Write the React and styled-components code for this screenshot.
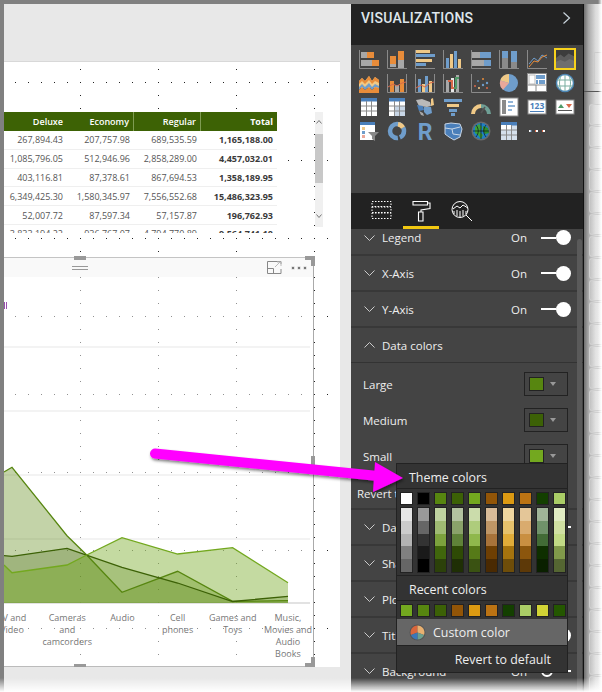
import React from "react";
import styled, { createGlobalStyle } from "styled-components";

const GlobalStyle = createGlobalStyle`
  html, body {
    margin: 0;
    padding: 0;
    background: #fff;
  }
  body {
    font-family: "Open Sans", "Liberation Sans", sans-serif;
  }
`;

const Frame = styled.div`
  position: relative;
  display: flex;
  width: 602px;
  height: 692px;
  padding: 4px 0 0 4px;
  box-sizing: border-box;
  overflow: hidden;
  background: #808080;
`;

const Workspace = styled.div`
  width: 347px;
  padding-top: 58px;
  box-sizing: border-box;
  background: #e8e8e8;
  box-shadow: inset 0 -1px 0 #e8e8e8;
`;

const Canvas = styled.div`
  position: relative;
  width: 336px;
  height: 605px;
  overflow: hidden;
  background: #fff;
  box-shadow: 0 -1px 0 #d8d8d8;
`;

const DotGrid = styled.svg`
  position: absolute;
  left: 0;
  top: 0;
  width: 336px;
  height: 605px;
`;

/* table visual */
const TableVisual = styled.div`
  position: absolute;
  left: 0;
  top: 50px;
  display: flex;
  justify-content: space-between;
  width: 319px;
  height: 121px;
`;

const TableClip = styled.div`
  width: 273px;
  height: 121px;
  overflow: hidden;
  background: #fff;
  font-size: 9px;
  color: #555;
`;

const TableRow = styled.div`
  display: grid;
  grid-template-columns: 63px 67px 67px 76px;
  height: ${(p) => (p.$head ? "19px" : "18.8px")};
  box-sizing: border-box;
  background: ${(p) => (p.$head ? "#3d6205" : "#fff")};
  color: ${(p) => (p.$head ? "#fff" : "#555")};
  font-weight: ${(p) => (p.$head ? 600 : 400)};
  border-bottom: ${(p) => (p.$head ? "0" : "1px solid #efefef")};
`;

const Cell = styled.div`
  display: flex;
  align-items: center;
  justify-content: flex-end;
  padding-right: 4px;
  white-space: nowrap;
  font-weight: ${(p) => (p.$bold ? 700 : "inherit")};
  color: ${(p) => (p.$bold && !p.$head ? "#3a3a3a" : "inherit")};
  border-right: ${(p) => (p.$line ? "1px solid #7f9c52" : "0")};
`;

const TableScroll = styled.div`
  display: flex;
  flex-direction: column;
  align-items: center;
  width: 8px;
  height: 115px;
  background: #f0f0f0;
`;

const ScrollThumb = styled.div`
  flex: none;
  width: 8px;
  height: 49px;
  background: #c8c8c8;
`;

const ScrollArrow = styled.svg`
  flex: none;
  width: 6px;
  height: 4px;
  margin: ${(p) => p.$margin};
`;

/* chart visual */
const ChartVisual = styled.div`
  position: absolute;
  left: 0;
  top: 195px;
  width: 310px;
  height: 410px;
  box-sizing: border-box;
  background: rgba(255, 255, 255, 0.5);
  border-top: 1px solid #c4c4c4;
  border-right: 1px solid #aaa;
  border-bottom: 1px solid #bbb;
`;

const ChartHeader = styled.div`
  display: flex;
  align-items: center;
  height: 19px;
  padding: 0 7px 0 68px;
  background: #f9f9f9;
`;

const DragLines = styled.div`
  width: 16px;
  height: 2px;
  border-top: 1px solid #999;
  border-bottom: 1px solid #999;
`;

const HeaderIcons = styled.div`
  display: flex;
  align-items: center;
  gap: 10px;
  margin-left: auto;
`;

const MoreDots = styled.div`
  display: flex;
  gap: 4px;
`;

const MoreDot = styled.i`
  width: 2px;
  height: 2px;
  background: #777;
  box-shadow: 0 0 0 0.5px #ccc;
`;

const Plot = styled.svg`
  display: block;
  width: 309px;
  height: 328px;
`;

const AxisLabels = styled.div`
  display: flex;
  margin: 7px 0 0 -19.6px;
  font-size: 9px;
  line-height: 12px;
  color: #777;
`;

const AxisLabel = styled.div`
  flex: 0 0 55.2px;
  text-align: center;
  white-space: pre-line;
`;

const LegendTick = styled.div`
  position: absolute;
  left: 0;
  top: 240px;
  width: 3px;
  height: 7px;
  border-left: 1px solid #9a4fb0;
  border-right: 1px solid #9a4fb0;
  box-sizing: border-box;
`;

const Handle = styled.div`
  position: absolute;
  left: ${(p) => p.$x}px;
  top: ${(p) => p.$y}px;
  width: ${(p) => p.$w}px;
  height: ${(p) => p.$h}px;
  background: #999;
`;

const Corner = styled.div`
  position: absolute;
  left: 301px;
  top: ${(p) => p.$y}px;
  width: 10px;
  height: 10px;
  box-sizing: border-box;
  border-right: 4px solid #999;
  ${(p) => (p.$bottom ? "border-bottom: 4px solid #999;" : "border-top: 4px solid #999;")}
`;

/* visualizations pane */
const Pane = styled.div`
  position: relative;
  display: flex;
  flex-direction: column;
  flex: 0 0 232px;
  box-sizing: content-box;
  border-right: 1px solid #111;
  background: #444;
  color: #eee;
  font-size: 11.5px;
`;

const PaneHeader = styled.div`
  display: flex;
  justify-content: space-between;
  height: 41px;
  padding: 7px 12px 0 10px;
  box-sizing: border-box;
  background: #222;
`;

const PaneTitle = styled.div`
  font-family: "Roboto", sans-serif;
  font-size: 14px;
  line-height: 14px;
  font-weight: 500;
  letter-spacing: 0.25px;
  color: #dfe6ec;
`;

const Gallery = styled.div`
  display: grid;
  grid-template-columns: repeat(8, 28px);
  grid-auto-rows: 24px;
  align-content: start;
  height: 148px;
  padding: 2px 0 0 4px;
  box-sizing: border-box;
`;

const GalleryCell = styled.div`
  display: flex;
  align-items: center;
  justify-content: center;
  width: 28px;
  height: 24px;
`;

const Selected = styled.div`
  display: flex;
  align-items: center;
  justify-content: center;
  width: 22px;
  height: 22px;
  box-sizing: border-box;
  border: 2px solid #f7d21c;
`;

const Viz = styled.svg`
  display: block;
  width: ${(p) => p.$size || 20}px;
  height: ${(p) => p.$size || 20}px;
`;

const TabBar = styled.div`
  display: flex;
  gap: 4px;
  height: 36px;
  padding-left: 12px;
  background: #222;
`;

const Tab = styled.div`
  display: flex;
  justify-content: center;
  width: 36px;
  padding-top: 7px;
  box-sizing: border-box;
  border-bottom: 3px solid ${(p) => (p.$active ? "#f2c811" : "transparent")};
`;

const Section = styled.div`
  display: flex;
  align-items: center;
  gap: 7px;
  height: ${(p) => (p.$first ? "27px" : p.$open ? "35px" : "36px")};
  padding: ${(p) => (p.$first ? "0 12px 8px 13px" : "0 12px 0 13px")};
  box-sizing: border-box;
  white-space: nowrap;
  border-bottom: ${(p) => (p.$open ? "1px solid #333" : "2px solid #383838")};
`;

const Chevron = styled.svg`
  flex: none;
  width: 11px;
  height: 6px;
`;

const OnLabel = styled.span`
  margin-left: auto;
  margin-right: 7px;
`;

const Toggle = styled.div`
  display: flex;
  align-items: center;
  justify-content: flex-end;
  flex-direction: ${(p) => (p.$on ? "row" : "row-reverse")};
  width: 30px;
  height: 15px;
`;

const ToggleLine = styled.div`
  flex: 1;
  height: 2px;
  background: #fff;
`;

const Knob = styled.div`
  width: ${(p) => (p.$on ? "15px" : "12px")};
  height: ${(p) => (p.$on ? "15px" : "12px")};
  box-sizing: border-box;
  border-radius: 50%;
  background: ${(p) => (p.$on ? "#fff" : "transparent")};
  border: ${(p) => (p.$on ? "0" : "2px solid #fff")};
`;

const ColorRows = styled.div`
  padding-top: 3px;
`;

const ColorRow = styled.div`
  display: flex;
  align-items: center;
  justify-content: space-between;
  height: 36px;
  padding: 0 15px 0 12px;
  box-sizing: border-box;
`;

const ColorPicker = styled.div`
  display: flex;
  align-items: center;
  gap: 6px;
  width: 44px;
  height: 24px;
  padding-left: 5px;
  box-sizing: border-box;
  border: 1px solid #222;
`;

const PickerSwatch = styled.div`
  width: 13px;
  height: 12px;
  box-sizing: content-box;
  border: 1px solid #222;
  margin-left: -1px;
  background: ${(p) => p.$color};
`;

const Caret = styled.div`
  width: 0;
  height: 0;
  border-left: 3.5px solid transparent;
  border-right: 3.5px solid transparent;
  border-top: 4px solid #999;
`;

const RevertRow = styled.div`
  height: 36px;
  padding: 12px 0 0 6px;
  box-sizing: border-box;
  border-bottom: 2px solid #383838;
  line-height: 16px;
`;

const PaneScroll = styled.div`
  position: absolute;
  left: 226px;
  top: 235px;
  bottom: 0;
  width: 5px;
  border-radius: 3px;
  background: #5a5a5a;
`;

/* colour popup */
const Popup = styled.div`
  position: absolute;
  left: 45px;
  top: 459px;
  width: 172px;
  height: 210px;
  box-sizing: border-box;
  background: #333;
  border: 1px solid #222;
  font-size: 12.4px;
`;

const PopupTitle = styled.div`
  height: 25px;
  padding-left: 12px;
  box-sizing: border-box;
  line-height: 27px;
  border-bottom: 1px solid #222;
`;

const SwatchRow = styled.div`
  display: flex;
  gap: 4px;
  padding: ${(p) => p.$pad || "3px 0 0 2.5px"};
`;

const Swatch = styled.div`
  width: 11px;
  height: 11px;
  margin: 1px;
  outline: 1px solid #222;
  background: ${(p) => p.$color};
`;

const Ramp = styled.div`
  display: flex;
  flex-direction: column;
  width: 11px;
  height: 64px;
  margin: 0 1px;
  outline: 1px solid #222;
`;

const RampStep = styled.div`
  flex: 1;
  background: ${(p) => p.$color};
`;

const PopupRule = styled.div`
  margin-top: 3px;
  border-top: 1px solid #222;
`;

const CustomRow = styled.div`
  display: flex;
  align-items: center;
  gap: 7px;
  height: 26px;
  margin-top: 2px;
  padding-left: 12px;
  box-sizing: border-box;
  background: #666;
`;

const DefaultRow = styled.div`
  padding: 6px 16px 0 0;
  text-align: right;
  line-height: 16px;
  border-top: 1px solid #222;
`;

/* fields pane, cut off at the right */
const Strip = styled.div`
  flex: 1;
  background: linear-gradient(90deg, #6f6f6f, #a8a8a8 25%, #dcdcdc 65%, #efefef);
`;

const StripHead = styled.div`
  height: 88px;
  box-sizing: border-box;
  border-bottom: 1px solid #555;
  padding: 48px 0 0 10px;
`;

const StripBox = styled.div`
  height: 30px;
  border: 1px solid #ccc;
  border-right: 0;
`;

const TileList = styled.div`
  display: flex;
  flex-direction: column;
  gap: 1px;
  padding: 12px 0 0 5px;
`;

const Tile = styled.div`
  height: 21px;
  box-sizing: border-box;
  border: 1px solid #d0d0d0;
  border-right: 0;
  border-radius: 3px 0 0 3px;
  background: rgba(255, 255, 255, 0.2);
`;

/* overlays */
const Pointer = styled.svg`
  position: absolute;
  left: 0;
  top: 0;
  width: 602px;
  height: 692px;
  pointer-events: none;
`;

const BottomFade = styled.div`
  position: absolute;
  left: 0;
  right: 0;
  bottom: 0;
  height: 14px;
  background: linear-gradient(rgba(255, 255, 255, 0), #fff);
`;

const RightFade = styled.div`
  position: absolute;
  top: 0;
  right: 0;
  bottom: 0;
  width: 4px;
  background: linear-gradient(90deg, rgba(255, 255, 255, 0), #fff);
`;

const B = "#6f9dcb";
const O = "#e88c3a";
const Y = "#f0c987";
const G = "#a8a8a8";
const A = "#8a8a8a";
const R = "#d9694a";

const Axes = () => <path d="M.5 1v18.5H20" stroke={A} fill="none" />;

const galleryIcons = [
  <><Axes /><rect x="2" y="3" width="6" height="6" fill={G} /><rect x="8" y="3" width="7" height="6" fill={O} /><rect x="2" y="11" width="11" height="6" fill={G} /><rect x="13" y="11" width="7" height="6" fill={O} /></>,
  <><Axes /><rect x="3" y="7" width="6" height="8" fill={O} /><rect x="3" y="15" width="6" height="3" fill={G} /><rect x="11" y="2" width="6" height="9" fill={O} /><rect x="11" y="11" width="6" height="8" fill={G} /></>,
  <><Axes /><rect x="1" y="1" width="14" height="3" fill={Y} /><rect x="1" y="5" width="19" height="3" fill={B} /><rect x="1" y="10" width="16" height="3" fill={Y} /><rect x="1" y="14" width="10" height="3" fill={B} /></>,
  <><path d="M0 19.5h20" stroke={A} /><path d="M.5 1v19" stroke={A} /><rect x="3" y="9" width="3" height="10" fill={B} /><rect x="7" y="5" width="3" height="14" fill={Y} /><rect x="11" y="2" width="3" height="17" fill={B} /><rect x="15" y="10" width="3" height="9" fill={Y} /></>,
  <><Axes /><rect x="1" y="3" width="8" height="6" fill={G} /><rect x="9" y="3" width="11" height="6" fill={B} /><rect x="1" y="11" width="12" height="6" fill={G} /><rect x="13" y="11" width="7" height="6" fill={B} /></>,
  <><Axes /><rect x="3" y="2" width="6" height="7" fill={B} /><rect x="3" y="9" width="6" height="10" fill={A} /><rect x="12" y="2" width="6" height="11" fill={B} /><rect x="12" y="13" width="6" height="6" fill={A} /></>,
  <><Axes /><path d="M2 15l5-6 4 3 4-6 5 3" stroke={B} fill="none" /><path d="M2 18l5-6 4 1 4-5 5-2" stroke={O} fill="none" /></>,
  <Selected key="sel"><Viz viewBox="0 0 20 20" $size={18}><rect width="20" height="20" fill="#3c3c3c" /><path d="M0 9l5-4 4 3 5-4 6 3v13H0z" fill="#5c5c5c" /><path d="M0 13l5-2 5 2 5-3 5 2v8H0z" fill="#6e6e6e" /></Viz></Selected>,

  <><path d="M0 8l3-3 3 3 4-5 3 5 3-4 4 3v8H0z" fill={Y} /><path d="M0 8l3-3 3 3 4-5 3 5 3-4 4 3v3l-4-2-3 3-3-4-4 4-3-3-3 3z" fill={O} /><path d="M0 14l3-3 3 3 4-4 3 4 3-3 4 2v2l-4-1-3 3-3-3-4 3-3-3-3 3z" fill={B} /><path d="M0 17l3-3 3 3 4-3 3 3 3-3 4 1v5H0z" fill={O} /></>,
  <><path d="M.5 1v18.5H20M19.5 1v18" stroke={A} fill="none" /><rect x="3" y="8" width="4" height="11" fill={O} /><rect x="8" y="12" width="4" height="7" fill={G} /><rect x="13" y="6" width="4" height="13" fill={O} /><path d="M1 14l5-3 4 2 5-3 4-1" stroke={R} fill="none" /></>,
  <><path d="M.5 1v18.5H20M19.5 1v18" stroke={A} fill="none" /><rect x="3" y="6" width="3" height="13" fill={B} /><rect x="7" y="11" width="3" height="8" fill={Y} /><rect x="10" y="3" width="3" height="16" fill={B} /><rect x="14" y="8" width="3" height="11" fill={Y} /><path d="M1 15l5-3 4 2 5-4 4-1" stroke={R} fill="none" /></>,
  <><Axes /><rect x="3" y="7" width="3" height="12" fill={G} /><rect x="8" y="5" width="3" height="14" fill="#e8e8e8" /><rect x="13" y="2" width="3" height="17" fill={G} /><path d="M5 8h4v7h3" stroke={R} strokeWidth="2" fill="none" /><path d="M11 15h2V5h3" stroke="#4f9a68" strokeWidth="2" fill="none" /></>,
  <><Axes /><circle cx="4" cy="13" r="1" fill={R} /><circle cx="7" cy="8" r="1" fill="#5a8fc0" /><circle cx="8" cy="15" r="1" fill={Y} /><circle cx="12" cy="6" r="1" fill={O} /><circle cx="12" cy="12" r="1.2" fill={B} /><circle cx="16" cy="10" r="1.2" fill={B} /><circle cx="16" cy="15" r="1" fill={R} /></>,
  <><circle cx="10" cy="10" r="9" fill={B} /><path d="M10 10V1a9 9 0 00-8.7 6.5z" fill={Y} /><path d="M10 10L1.3 7.5a9 9 0 002.7 9.3z" fill="#eaa89a" /></>,
  <><rect x=".5" y=".5" width="19" height="18" fill="#fff" stroke={A} /><rect x="2" y="2" width="6" height="9" fill="#fff" stroke="#bbb" /><rect x="9" y="2" width="9" height="4" fill={B} /><rect x="12" y="7" width="6" height="4" fill={B} /><rect x="9" y="7" width="2" height="4" fill={B} /><path d="M1 12h18M9 12v6" stroke={A} /></>,
  <><circle cx="10" cy="10" r="8.5" fill="#fff" stroke="#4c86b4" strokeWidth="1.5" /><path d="M2 7h16M2 13h16M10 2v16M6 3c-2 4-2 10 0 14M14 3c2 4 2 10 0 14" stroke="#79ad9f" fill="none" /></>,

  <><rect x="2" y="1" width="16" height="18" fill="#fff" /><rect x="2" y="1" width="16" height="3.5" fill="#4a7fba" /><path d="M7.5 4v15M12.5 4v15M2 9h16M2 14h16" stroke={A} /></>,
  <><rect x="2" y="1" width="16" height="18" fill="#fff" /><rect x="2" y="1" width="16" height="3.5" fill="#4a7fba" /><rect x="8" y="9" width="10" height="10" fill="#c8d6e6" /><path d="M7.5 4v15M12.5 4v15M2 9h16M2 14h16" stroke={A} /></>,
  <><path d="M1 3l6-1 8 3 1 4-4 1-8-1z" fill="#b9b9b9" /><path d="M2 8l6 1 1 4-5 1z" fill="#4a7fba" /><path d="M9 10h7l1 6-5 2-3-3z" fill={B} /><path d="M16 2l2-1 1 7-3 1z" fill={Y} /><path d="M4 14l4 2 1 3-3-1z" fill={G} /></>,
  <><rect x="1" y="2" width="18" height="3" fill={B} /><rect x="4" y="7" width="12" height="3" fill={Y} /><rect x="6" y="12" width="8" height="3" fill={B} /><rect x="8" y="16" width="4" height="3" fill={B} /></>,
  <><path d="M2 17a8 8 0 018-8" stroke={Y} strokeWidth="4" fill="none" /><path d="M10 9a8 8 0 018 8" stroke="#6f9f95" strokeWidth="4" fill="none" /><path d="M10 16l4-6" stroke="#555" strokeWidth="1.5" /></>,
  <><rect x="1" y="1" width="18" height="18" fill="#fff" stroke={A} /><rect x="3" y="3" width="4" height="14" fill={A} /><path d="M9 5h5M9 9h7M9 13h4" stroke={B} strokeWidth="1.5" /></>,
  <><rect x="1" y="3" width="18" height="14" fill="#fff" stroke={A} /><path d="M3 14.5h14" stroke="#4a7fba" /><text x="10" y="12" textAnchor="middle" fontSize="8.5" fontFamily="Open Sans" fontWeight="700" fill="#4a7fba">123</text></>,
  <><rect x="1" y="3" width="18" height="14" fill="#fff" stroke={A} /><path d="M3 11l3-4 3 4z" fill="#4f9a68" /><path d="M11 7h6l-3 4z" fill={R} /><path d="M3 13.5h14" stroke="#555" /></>,

  <><rect x="1" y="1" width="15" height="18" fill="#fff" /><rect x="1" y="1" width="15" height="3" fill="#4a7fba" /><rect x="3" y="6" width="3" height="3" fill={Y} /><rect x="3" y="10" width="3" height="3" fill={B} /><rect x="3" y="14" width="3" height="3" fill="#eaa89a" /><path d="M9 11h11l-4 4v5l-3-2v-3z" fill="#888" /></>,
  <><circle cx="10" cy="10" r="7" fill="none" stroke={B} strokeWidth="4.5" strokeDasharray="8 2 28 2" /><path d="M11 3.2a7 7 0 015 3.5" stroke={Y} strokeWidth="4.5" fill="none" /></>,
  <text x="10" y="19" textAnchor="middle" fontSize="23" fontFamily="Roboto" fontWeight="700" fill={B}>R</text>,
  <><path d="M2 3l6-1 9 1 2 5-2 8-6 3-5-3-4-3z" fill="#4a7fba" stroke="#c8d6e6" /><path d="M2 7l7 1 1 5M9 8l8-2M10 13l7 1" stroke="#c8d6e6" fill="none" /></>,
  <><circle cx="10" cy="10" r="9.5" fill="#6a6a6a" /><circle cx="10" cy="10" r="8" fill="#1f7fc4" /><path d="M4 6l4-3 3 3-2 5 3 3-2 4-3-4-3-2z" fill="#3ea23a" /><path d="M12 5l5 2 1 5-4 1-2-3z" fill="#2d8f2d" /><path d="M2 10h16M10 2v16M5 4c3 4 3 8 0 12M15 4c-3 4-3 8 0 12" stroke="#111" strokeWidth=".7" fill="none" /></>,
  <><rect x="2" y="1" width="16" height="18" fill="#d5e0ec" /><rect x="2" y="1" width="16" height="3.5" fill="#4a7fba" /><rect x="2" y="4" width="5.5" height="5" fill="#fff" /><rect x="8" y="4" width="4.5" height="5" fill="#fff" /><path d="M7.5 4v15M12.5 4v15M2 9h16M2 14h16" stroke={A} /></>,
  <><rect x="2" y="9" width="2" height="2" fill="#fff" /><rect x="3.5" y="9" width="1" height="2" fill={B} /><rect x="9" y="9" width="2" height="2" fill="#fff" /><rect x="8" y="9" width="1" height="2" fill={R} /><rect x="16" y="9" width="2" height="2" fill="#fff" /><rect x="15" y="9" width="1" height="2" fill={R} /></>,
];

const themeColors = ["#ffffff", "#000000", "#578610", "#3c6106", "#73a81f", "#925507", "#dc9a12", "#bb7313", "#133f00", "#aacd66"];

const themeRamps = [
  ["#e6e6e6", "#cccccc", "#b3b3b3", "#808080", "#666666"],
  ["#999999", "#666666", "#333333", "#1a1a1a", "#000000"],
  ["#bed2a0", "#9fbb73", "#7ca23d", "#40660c", "#2c410a"],
  ["#b3c2a0", "#8aa26a", "#5f8238", "#2e4a05", "#1f2f05"],
  ["#cbdcab", "#aecc7c", "#8fb84c", "#567a18", "#3a5212"],
  ["#d8bb98", "#bf9666", "#a8733a", "#6e3f03", "#4a2a02"],
  ["#efd69f", "#e6c26c", "#e0ac39", "#a5730e", "#6e4d09"],
  ["#e4c698", "#d9ab6e", "#c98f41", "#8c560d", "#5d3908"],
  ["#a0b498", "#70926a", "#426b36", "#0e2f00", "#0a2000"],
  ["#e0ebc2", "#d0e0a2", "#c1da85", "#80994a", "#556632"],
];

const recentColors = ["#73a81f", "#578610", "#3c6106", "#925507", "#dc9a12", "#bb7313", "#133f00", "#aacd66", "#d1d335", "#245700"];

const tableRows = [
  ["267,894.43", "207,757.98", "689,535.59", "1,165,188.00"],
  ["1,085,796.05", "512,946.96", "2,858,289.00", "4,457,032.01"],
  ["403,116.81", "87,378.61", "867,694.53", "1,358,189.95"],
  ["6,349,425.30", "1,580,345.97", "7,556,552.68", "15,486,323.95"],
  ["52,007.72", "87,597.34", "57,157.87", "196,762.93"],
  ["3,833,194.22", "936,767.07", "4,794,770.89", "9,564,741.18"],
];

const axisNames = ["TV and\nVideo", "Cameras\nand\ncamcorders", "Audio", "Cell\nphones", "Games and\nToys", "Music,\nMovies and\nAudio\nBooks"];

const Down = () => (
  <Chevron viewBox="0 0 11 6"><path d="M.5.5l5 5 5-5" stroke="#ccc" fill="none" /></Chevron>
);

const Row = ({ name, on, first }) => (
  <Section $first={first}>
    <Down />
    {name}
    {on !== undefined && (
      <>
        <OnLabel>On</OnLabel>
        <Toggle $on={on}>
          <ToggleLine />
          <Knob $on={on} />
        </Toggle>
      </>
    )}
  </Section>
);

const Picker = ({ label, color }) => (
  <ColorRow>
    {label}
    <ColorPicker>
      <PickerSwatch $color={color} />
      <Caret />
    </ColorPicker>
  </ColorRow>
);

const App = () => {
  return (
    <Frame>
      <GlobalStyle />
      <Workspace>
        <Canvas>
          <DotGrid>
            <defs>
              <pattern id="dots" x="-2" y="20" width="78" height="78" patternUnits="userSpaceOnUse">
                {Array.from({ length: 6 }, (_, i) => (
                  <React.Fragment key={i}>
                    <rect x={i * 13} y="0" width="1" height="1" fill="#222" />
                    <rect x="0" y={i * 13} width="1" height="1" fill="#222" />
                  </React.Fragment>
                ))}
              </pattern>
            </defs>
            <rect width="336" height="605" fill="url(#dots)" />
          </DotGrid>

          <TableVisual>
            <TableClip>
              <TableRow $head>
                <Cell>Deluxe</Cell>
                <Cell $line>Economy</Cell>
                <Cell $line>Regular</Cell>
                <Cell $bold $head>Total</Cell>
              </TableRow>
              {tableRows.map((row) => (
                <TableRow key={row[3]}>
                  <Cell>{row[0]}</Cell>
                  <Cell>{row[1]}</Cell>
                  <Cell>{row[2]}</Cell>
                  <Cell $bold>{row[3]}</Cell>
                </TableRow>
              ))}
            </TableClip>
            <TableScroll>
              <ScrollArrow viewBox="0 0 6 4" $margin="8px 0 10px"><path d="M.5 3.5L3 .5l2.5 3" stroke="#777" fill="none" /></ScrollArrow>
              <ScrollThumb />
              <ScrollArrow viewBox="0 0 6 4" $margin="31px 0 0"><path d="M.5.5L3 3.5 5.500.5" stroke="#777" fill="none" /></ScrollArrow>
            </TableScroll>
          </TableVisual>

          <ChartVisual>
            <ChartHeader>
              <DragLines />
              <HeaderIcons>
                <svg width="15" height="13" viewBox="0 0 15 13">
                  <path d="M14 3V.5H.5v12H14V8M.5 7.500h6v5" stroke="#888" fill="none" />
                  <path d="M8 6l5-5M10 1h4v4" stroke="#bbb" fill="none" />
                </svg>
                <MoreDots>
                  <MoreDot />
                  <MoreDot />
                  <MoreDot />
                </MoreDots>
              </HeaderIcons>
            </ChartHeader>
            <Plot viewBox="4 278 309 328">
              <path d="M4 348h306M4 412h306M4 476h306M4 540h306" stroke="#f3f3f3" strokeWidth="2" />
              <path d="M4 604h306" stroke="#d8d8d8" strokeWidth="1.500" />
              <path d="M4 473L12 468.300 67 536.700 86.700 556 122 593.300 177.600 572.300 232.600 602.300 288 601.700V604H4z" fill="#5a860f" fillOpacity="0.36" />
              <path d="M4 556.700L12 557.300 67 549.300 122 568.300 177.600 584 232.600 602.500 288 597.300V604H4z" fill="#3c6106" fillOpacity="0.26" />
              <path d="M4 566L12 573.700 67 566 86.700 556 122 538.700 177.600 555 232.600 548.700 288 583.700V604H4z" fill="#73a81f" fillOpacity="0.42" />
              <path d="M4 473L12 468.300 67 536.700 86.700 556 122 593.300 177.600 572.300 232.600 602.300 288 601.700" stroke="#578610" strokeWidth="1.300" fill="none" />
              <path d="M4 556.700L12 557.300 67 549.300 122 568.300 177.600 584 232.600 602.500 288 597.300" stroke="#3c6106" strokeWidth="1.300" fill="none" />
              <path d="M4 566L12 573.700 67 566 86.700 556 122 538.700 177.600 555 232.600 548.700 288 583.700" stroke="#73a81f" strokeWidth="1.300" fill="none" />
            </Plot>
            <AxisLabels>
              {axisNames.map((name) => (
                <AxisLabel key={name}>{name}</AxisLabel>
              ))}
            </AxisLabels>
          </ChartVisual>

          <LegendTick />
          <Handle $x={70} $y={194} $w={12} $h={4} />
          <Handle $x={70} $y={602} $w={12} $h={3} />
          <Handle $x={307} $y={394} $w={4} $h={10} />
          <Corner $y={194} />
          <Corner $y={595} $bottom />
        </Canvas>
      </Workspace>

      <Pane>
        <PaneHeader>
          <PaneTitle>VISUALIZATIONS</PaneTitle>
          <svg width="9" height="14" viewBox="0 0 9 14">
            <path d="M1.500 1.500l6 5.500-6 5.500" stroke="#c9d4dc" strokeWidth="1.200" fill="none" />
          </svg>
        </PaneHeader>

        <Gallery>
          {galleryIcons.map((icon, i) => (
            <GalleryCell key={i}>
              {i === 7 ? icon : <Viz viewBox="0 0 20 20">{icon}</Viz>}
            </GalleryCell>
          ))}
        </Gallery>

        <TabBar>
          <Tab>
            <svg width="21" height="20" viewBox="0 0 21 20">
              <path d="M1 1.500h19v5H1zM1 7h19v5.500H1zM1 13h19v5.500H1z" stroke="#fff" strokeDasharray="1.500 1.500" fill="none" />
            </svg>
          </Tab>
          <Tab $active>
            <svg width="19" height="22" viewBox="0 0 19 22">
              <path d="M1 1.500h14.500v3.500H1zM15.500 3H18v5.500L9 10v2" stroke="#fff" strokeWidth="1.100" fill="none" />
              <path d="M6.500 12h4.500v9H6.500z" stroke="#fff" strokeWidth="1.100" fill="none" />
            </svg>
          </Tab>
          <Tab>
            <svg width="21" height="24" viewBox="0 0 21 24">
              <circle cx="9" cy="9.500" r="8" stroke="#fff" fill="none" />
              <path d="M2 9l4-3 3 2 3-3 5 3M3 11v3M6 10v6M9 11v6M12 10v6M15 11v3M15 15l6 6" stroke="#fff" fill="none" />
            </svg>
          </Tab>
        </TabBar>

        <Row name="Legend" on first />
        <Row name="X-Axis" on />
        <Row name="Y-Axis" on />
        <Section $open>
          <Chevron viewBox="0 0 11 6"><path d="M.5 5.500l5-5 5 5" stroke="#ccc" fill="none" /></Chevron>
          Data colors
        </Section>
        <ColorRows>
          <Picker label="Large" color="#578610" />
          <Picker label="Medium" color="#3c6106" />
          <Picker label="Small" color="#73a81f" />
        </ColorRows>
        <RevertRow>Revert to default</RevertRow>
        <Row name="Data labels" on={false} />
        <Row name="Shapes" />
        <Row name="Plot area" />
        <Row name="Title" on />
        <Row name="Background" on={false} />

        <PaneScroll />

        <Popup>
          <PopupTitle>Theme colors</PopupTitle>
          <SwatchRow>
            {themeColors.map((c) => (
              <Swatch key={c} $color={c} />
            ))}
          </SwatchRow>
          <SwatchRow>
            {themeRamps.map((ramp) => (
              <Ramp key={ramp[0]}>
                {ramp.map((c) => (
                  <RampStep key={c} $color={c} />
                ))}
              </Ramp>
            ))}
          </SwatchRow>
          <PopupRule />
          <PopupTitle>Recent colors</PopupTitle>
          <SwatchRow>
            {recentColors.map((c) => (
              <Swatch key={c} $color={c} />
            ))}
          </SwatchRow>
          <CustomRow>
            <svg width="17" height="17" viewBox="0 0 17 17">
              <circle cx="8.500" cy="8.500" r="8" fill="#555" />
              <path d="M8.500 8.500V1.500a7 7 0 00-6.500 9.500z" fill="#d9663c" />
              <path d="M8.500 8.500V1.500a7 7 0 016.500 9.500z" fill="#e8b070" />
              <path d="M8.500 8.500l6.500 2.500a7 7 0 01-6.500 4.500z" fill="#6ea08e" />
              <path d="M8.500 8.500L2 11a7 7 0 006.500 4.500z" fill="#3c78b8" />
            </svg>
            Custom color
          </CustomRow>
          <DefaultRow>Revert to default</DefaultRow>
        </Popup>
      </Pane>

      <Strip>
        <StripHead>
          <StripBox />
        </StripHead>
        <TileList>
          {Array.from({ length: 27 }, (_, i) => (
            <Tile key={i} />
          ))}
        </TileList>
      </Strip>

      <Pointer>
        <defs>
          <filter id="arrowShadow" x="-10%" y="-30%" width="120%" height="170%">
            <feDropShadow dx="1" dy="2" stdDeviation="1.500" floodColor="#000" floodOpacity="0.5" />
          </filter>
        </defs>
        <g filter="url(#arrowShadow)">
          <path d="M155 453.500L378 476" stroke="#ff00ff" strokeWidth="10" strokeLinecap="round" />
          <path d="M375 462L403 478 373 492z" fill="#ff00ff" />
        </g>
      </Pointer>

      <BottomFade />
      <RightFade />
    </Frame>
  );
};

export default App;
